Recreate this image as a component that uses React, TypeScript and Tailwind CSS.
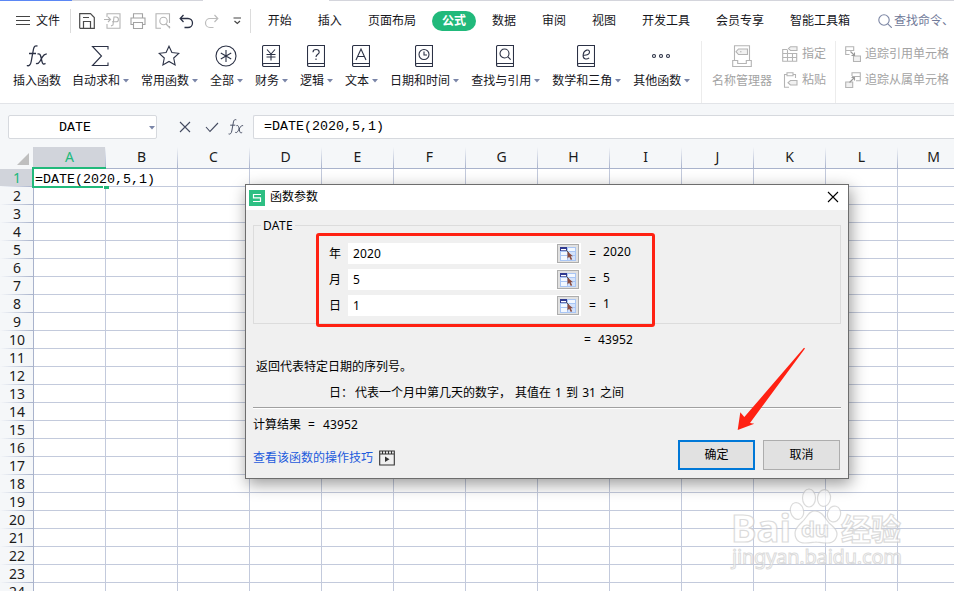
import React from 'react';

const INK = '#2b3145';
const GREY = '#b4b4b4';

const Svg: React.FC<{ w: number; h: number; color?: string; className?: string; children: React.ReactNode }> = ({ w, h, color = INK, className, children }) => (
  <svg width={w} height={h} viewBox={`0 0 ${w} ${h}`} fill="none" stroke={color} strokeWidth={1.1} className={`shrink-0 ${className ?? ''}`}>
    {children}
  </svg>
);

const Caret = () => (
  <svg width="6" height="4" viewBox="0 0 6 4" className="shrink-0"><path d="M0 0h6L3 3.6z" fill="#7a85a8" /></svg>
);

const FxIcon: React.FC<{ size?: number; color?: string }> = ({ size = 22, color = INK }) => (
  <svg width={size} height={size} viewBox="0 0 22 22" fill="none" stroke={color} strokeWidth={1.3} className="shrink-0">
    <path d="M11.500 1.200C9.300.2 8 1.400 7.500 4L5.200 16.500C4.700 19.600 3 21.500.8 20.500M3 8.500h7" />
    <path d="M11.500 9.200c2-.9 2.800.2 3.300 2.300l1.200 5.200c.5 2.300 1.600 3 3.500 1.700M20.800 9.200c-2-.8-3.200.8-4.500 3l-2.300 4c-1.200 2-2.300 3-4 2.200" />
  </svg>
);

const Book: React.FC<{ children: React.ReactNode }> = ({ children }) => (
  <Svg w={18} h={22}>
    <path d="M17.500 18.500V.5H2a1.500 1.500 0 0 0-1.500 1.500V20A1.500 1.500 0 0 0 2 21.500h15.500v-3H2A1.500 1.500 0 0 0 .5 20" />
    {children}
  </Svg>
);

const tabs = ['开始', '插入', '页面布局', '公式', '数据', '审阅', '视图', '开发工具', '会员专享', '智能工具箱'];

const functionGroups: { label: string; icon: React.ReactNode }[] = [
  { label: '自动求和', icon: <Svg w={18} h={22}><path d="M17 4.500V1.500H1.500L10.500 11L1.500 20.500H17V17.500" /></Svg> },
  { label: '常用函数', icon: <Svg w={22} h={22}><path d="M11 1.200l2.900 6.300 6.900.8-5.100 4.700 1.400 6.900L11 16.500l-6.100 3.400 1.400-6.900L1.200 8.300l6.900-.8z" /></Svg> },
  { label: '全部', icon: <Svg w={22} h={22}><circle cx="11" cy="11" r="10" /><path d="M11 5v12M5.800 8l10.400 6M16.200 8L5.800 14" /></Svg> },
  { label: '财务', icon: <Book><path d="M5 4.500l4 4.500 4-4.500M4.500 9.500h9M4.500 12h9M9 9v6.500" /></Book> },
  { label: '逻辑', icon: <Book><path d="M6 7.200c0-3.600 6.200-3.600 6.200 0C12.200 9.300 9 9.200 9 12M9 13.500v1.500" /></Book> },
  { label: '文本', icon: <Book><path d="M4 15L9 4l5 11M5.700 11.500h6.600" /></Book> },
  { label: '日期和时间', icon: <Book><circle cx="9" cy="9.500" r="5" /><path d="M9 6.500V10h3" /></Book> },
  { label: '查找与引用', icon: <Book><circle cx="8.500" cy="8.500" r="4.500" /><path d="M11.700 11.700l3 3" /></Book> },
  { label: '数学和三角', icon: <Book><path d="M6.200 10.200c4 .3 6.300-1 6.300-3.200 0-3.400-5.500-2.500-6.300 2.500-.7 4.700 3.300 5.600 6 3.300" /></Book> },
  { label: '其他函数', icon: <Svg w={20} h={22}><circle cx="3" cy="11" r="1.500" /><circle cx="10" cy="11" r="1.500" /><circle cx="17" cy="11" r="1.500" /></Svg> },
];

const QuickAccess = () => (
  <div className="flex items-center gap-[9px] pl-2">
    <Svg w={16} h={16} color="#4b4b4b"><path d="M.7 15.300V.7h10.800l3.800 3.800v10.800H.7M4.500 15V8.500h7V15M4 4.500h6" strokeWidth={1.200} /></Svg>
    <Svg w={17} h={16} color={GREY}><path d="M3 4V.7h13v14.600H3V11M0 6.500h6M4 4l2.500 2.500L4 9M7 13l2-1 1-8h2a2.200 2.200 0 0 1 0 4.800H8" /></Svg>
    <Svg w={16} h={16} color="#a2a2a2"><path d="M3.500 5V.8h9V5M3.500 11.500H1V5h14v6.500h-2.500M3.500 9.500h9v6h-9z" /></Svg>
    <Svg w={16} h={16} color={GREY}><path d="M6 15.200H1V.8h13.500V10M14.500 13v2.200" /><circle cx="8.500" cy="8" r="3.700" /><path d="M11 11l4 4" /></Svg>
    <Svg w={15} h={15} color={INK} className="-ml-px"><path d="M4.500 1L1.200 4.500 4.500 8M1.200 4.500H9a4.300 4.300 0 0 1 0 9H5.500" strokeWidth={1.300} /></Svg>
    <Svg w={15} h={15} color="#bcbcbc" className="ml-px"><path d="M10.500 1l3.300 3.500L10.500 8M13.800 4.500H6a4.300 4.300 0 0 0 0 9h3.500" strokeWidth={1.200} /></Svg>
    <Svg w={9} h={8} color="#444" className="ml-[5px]"><path d="M.5 1h7.500M1.500 4l2.800 2.500L7 4" strokeWidth={1.200} /></Svg>
  </div>
);

const MenuBar = () => (
  <div className="flex h-[40px] shrink-0 items-center whitespace-nowrap text-xs text-[#16161c]">
    <div className="flex w-[70px] items-center gap-[6px] pl-4">
      <Svg w={14} h={11} color="#444" className="-mt-px"><path d="M0 1.500h14M0 5.500h14M0 9.500h14" strokeWidth={1} /></Svg>
      <span>文件</span>
    </div>
    <div className="h-6 w-px bg-[#dcdcdc]" />
    <div className="flex w-[179px] shrink-0"><QuickAccess /></div>
    <div className="h-6 w-px shrink-0 bg-[#dcdcdc]" />
    <nav className="flex shrink-0 items-center gap-[26px] pl-[17px]">
      {tabs.map(tab => tab === '公式'
        ? <span key={tab} className="-mx-[10px] -mt-px flex h-5 w-11 items-center justify-center rounded-full bg-[#21b97b] font-bold text-white">{tab}</span>
        : <span key={tab}>{tab}</span>)}
    </nav>
    <div className="flex shrink-0 items-center gap-[2px] pl-7 text-[#707a99]">
      <Svg w={14} h={14} color="#7c86a4"><circle cx="6" cy="6" r="5.200" /><path d="M9.800 9.800l4 4" /></Svg>
      <span className="-mt-px">查找命令、</span>
    </div>
  </div>
);

const SmallTool: React.FC<{ label: string; icon: React.ReactNode }> = ({ label, icon }) => (
  <div className="flex h-[26px] items-center gap-1">{icon}<span>{label}</span></div>
);

const Ribbon = () => (
  <div className="flex h-[62px] shrink-0 whitespace-nowrap text-xs leading-4 text-[#16161c]">
    <div className="flex w-[701px] shrink-0 gap-3 pl-[13px] pt-1">
      <div className="-mr-px flex flex-col items-center gap-[6px]">
        <FxIcon />
        <span>插入函数</span>
      </div>
      {functionGroups.map(group => (
        <div key={group.label} className="flex flex-col items-center gap-[6px]">
          <div className="pr-[2px]">{group.icon}</div>
          <div className="flex items-center gap-[3px]"><span>{group.label}</span><Caret /></div>
        </div>
      ))}
    </div>
    <div className="flex w-[134px] shrink-0 border-l border-[#ececec] pl-[10px] text-[#a3a3a3]">
      <div className="flex flex-col items-center gap-[6px] pt-1">
        <Svg w={20} h={22} color={GREY}>
          <path d="M2.500 15V.7h15V15M.7 15.500h5v3h8.600v-3h5v6H.7z" />
          <path d="M6.500 4h9v5.500h-9L4 6.700zM8 6.700h1.500" fill="#f1f1f1" />
        </Svg>
        <span>名称管理器</span>
      </div>
      <div className="flex flex-col pl-[10px]">
        <SmallTool label="指定" icon={<Svg w={16} h={16} color={GREY}><path d="M5 3.500H.7v11.800h14V7M.7 7.500h14M.7 11.500h14M5.500 3.500v12M10.500 7.500v8" /><path d="M8.500.7H15v3.800H8.500L6.500 2.600z" fill="#f1f1f1" /></Svg>} />
        <SmallTool label="粘贴" icon={<Svg w={16} h={16} color={GREY}><path d="M7 15.200H2.500V2.500H5M11 2.500h2.500V6M5 .8h6v3H5z" /><path d="M8.500 8.500H15v4.500H8.500L6 10.700z" fill="#f1f1f1" /></Svg>} />
      </div>
    </div>
    <div className="flex flex-col border-l border-[#ececec] pl-[9px] text-[#a3a3a3]">
      <SmallTool label="追踪引用单元格" icon={<Svg w={16} h={16} color={GREY}><path d="M4.500 8.500H.7V.7h8V5M.7 4.500h8" /><path d="M8.500 10h7v5.500h-7z" fill="#f1f1f1" /><path d="M5.500 5.500l4 4M9.500 6.500v3h-3" stroke="#999" /></Svg>} />
      <SmallTool label="追踪从属单元格" icon={<Svg w={16} h={16} color={GREY}><path d="M7 4V.7h8.300v8H11M7 4.500h8.300" /><path d="M.7 10h7v5.500h-7z" fill="#f1f1f1" /><path d="M4.500 10.500l5-5M6.500 5.500h3v3" stroke="#999" /></Svg>} />
    </div>
  </div>
);

const FormulaBar = () => (
  <div className="flex h-[44px] shrink-0 items-center border-t border-[#e2e4e8] bg-[#f5f7f9] pt-[3px] font-['Liberation_Mono',monospace] text-[13.33px] text-black">
    <div className="ml-2 flex h-6 w-[149px] shrink-0 items-center rounded-[2px] border border-[#d6d9de] bg-white pl-[50px] pt-[2px]">
      <span className="w-[90px]">DATE</span>
      <Caret />
    </div>
    <div className="flex w-[96px] shrink-0 items-center pl-[22px]">
      <Svg w={12} h={12} color="#434a60"><path d="M1 1l10 10M11 1L1 11" /></Svg>
      <Svg w={14} h={12} color="#434a60" className="ml-[14px]"><path d="M1 6l4 4.500L13 2" /></Svg>
      <span className="ml-[9px]"><FxIcon size={16} color="#434a60" /></span>
    </div>
    <div className="flex h-6 flex-1 items-center rounded-l-[2px] border border-r-0 border-[#d6d9de] bg-white pl-[10px]">=DATE(2020,5,1)</div>
  </div>
);

const columns = 'ABCDEFGHIJKLM'.split('');
const rows = Array.from({ length: 24 }, (_, i) => i + 1);

const Sheet = () => (
  <div className="relative flex-1 font-['Noto_Sans',sans-serif] text-sm text-[#1b1b1b]">
    <div className="flex h-[22px] bg-[#f5f7f9]">
      <div className="flex w-[33px] shrink-0 items-start justify-end pr-1 pt-[6px]">
        <svg width="12" height="12" viewBox="0 0 12 12"><path d="M12 0v12H0z" fill="#bfbfbf" /></svg>
      </div>
      <div className="w-px shrink-0 bg-[#d0d3da]" />
      {columns.map(col => (
        <div key={col} className="flex w-[72px] shrink-0 border-b border-[#a9b3cc]">
          <div className={col === 'A' ? 'flex flex-1 items-center justify-center bg-[#d1d4db] pb-px text-[#21b97b]' : 'flex flex-1 items-center justify-center pb-px'}>{col}</div>
          <div className="w-px bg-linear-to-b from-[#f5f7f9] to-[#a9b3cc]" />
        </div>
      ))}
    </div>
    {rows.map(row => (
      <div key={row} className="flex h-[18px] leading-[17px]">
        <div className={row === 1 ? 'flex w-[33px] shrink-0 flex-col bg-[#d1d4db] text-[#21b97b]' : 'flex w-[33px] shrink-0 flex-col bg-[#f5f7f9]'}>
          <span className="h-[17px] pl-px text-center">{row}</span>
          <div className="h-px bg-linear-to-r from-[#f5f7f9] to-[#a9b3cc]" />
        </div>
        <div className="w-px shrink-0 bg-[#a9b3cc]" />
        {columns.map(col => <div key={col} className="w-[72px] shrink-0 border-b border-r border-[#c3cadc]" />)}
      </div>
    ))}
    {/* in-cell editor spills over into B1 */}
    <div className="absolute left-[32px] top-[20px] h-[21px] w-[74px] border-y-2 border-l-2 border-[#21b97b]">
      <div className="h-[17px] w-[142px] whitespace-nowrap bg-white pl-px pt-px font-['Liberation_Mono',monospace] text-[13.33px] text-black">=DATE(2020,5,1)</div>
      <div className="absolute -bottom-[3px] -right-[3px] h-1 w-[6px] border-l border-t border-white bg-[#21b97b]" />
    </div>
  </div>
);

const RangePicker = () => (
  <div className="flex h-[19px] w-[22px] items-center justify-center border border-[#adadad] bg-[#e1e1e1]">
    <svg width="16" height="14" viewBox="0 0 16 14">
      <path d="M0 0h16v14H0z" fill="#a9c6f5" />
      <path d="M1 5h6v3H1zM1 9h6v4H1zM8 1h7v3H8z" fill="#f3f8ff" />
      <path d="M8 5h7v3H8zM8 9h7v4H8z" fill="#d3e2fb" />
      <path d="M0 0h7v4H0z" fill="#303a91" /><path d="M1 2h5v1.300H1z" fill="#fff" />
      <path d="M6 3l3 3" stroke="#555" />
      <path d="M7.500 4.500v7l1.700-1.700 1.600 3.200 1.400-.7-1.500-3h2.300z" fill="#8a4a3c" />
    </svg>
  </div>
);

const args = [
  { label: '年', value: '2020' },
  { label: '月', value: '5' },
  { label: '日', value: '1' },
];

const FunctionDialog = () => (
  <div className="absolute left-[245px] top-[184px] flex h-[295px] w-[604px] flex-col border border-[#6d6d6d] bg-[#f0f0f0] text-xs leading-4 text-black shadow-[2px_5px_15px_rgba(0,0,0,0.4)]">
    <div className="flex h-[25px] shrink-0 items-center bg-white pl-[3px] pr-[9px]">
      <svg width="16" height="16" viewBox="0 0 16 16"><path d="M0 0h16v16H0z" fill="#2dbf83" /><path d="M12 4.500H4.500v3.300h7v3.700H4" fill="none" stroke="#fff" strokeWidth="1.200" /></svg>
      <span className="-mt-px flex-1 pl-[5px]">函数参数</span>
      <Svg w={12} h={12} color="#000" className="-mt-px"><path d="M1 1l10 10M11 1L1 11" /></Svg>
    </div>
    <fieldset className="mx-[7px] mt-[6px] h-[108px] shrink-0 border border-[#dcdcdc]">
      <legend className="ml-[7px] px-[2px] pt-[2px] tracking-[0.3px]">DATE</legend>
      <div className="-mt-px ml-[62px] h-[94px] w-[339px] rounded-[3px] border-[3px] border-[#ff2112] pl-[10px] pt-[7px]">
        {args.map(arg => (
          <div key={arg.label} className="mb-[5px] flex h-[21px] items-center">
            <span className="w-[19px]">{arg.label}</span>
            <div className="flex h-[21px] w-[233px] items-center justify-between bg-white pl-[5px] pr-[2px]">
              <span className="tracking-[0.13px]">{arg.value}</span>
              <RangePicker />
            </div>
            <span className="w-[22px] pl-2">=</span>
            <span className="pb-[4px] tracking-[0.13px]">{arg.value}</span>
          </div>
        ))}
      </div>
    </fieldset>
    <div className="ml-[338px] mt-2 flex gap-[7px] tracking-[0.13px]"><span>=</span><span>43952</span></div>
    <div className="ml-[10px] mt-[11px]">返回代表特定日期的序列号。</div>
    <div className="ml-[83px] mt-[10px] flex whitespace-pre">
      <span className="w-[26px]">日：</span>
      <span className="w-[160px]">代表一个月中第几天的数字，</span>
      <span className="[word-spacing:1px]">其值在 1 到 31 之间</span>
    </div>
    <div className="mx-[7px] mt-[6px] h-[2px] shrink-0 border-b border-white bg-[#a0a0a0]" />
    <div className="ml-[7px] mt-[8px] flex tracking-[0.13px]"><span className="w-[55px] tracking-normal">计算结果</span><span className="w-[15px]">=</span><span>43952</span></div>
    <div className="flex pl-[7px] pr-2 pt-[7px]">
      <div className="flex flex-1 items-start gap-[6px] pt-[10px] text-[#1d5bdc]">
        <span>查看该函数的操作技巧</span>
        <Svg w={16} h={16} color="#333"><path d="M.7 1h14.600v14H.7zM.7 4h14.600M3.500 1v3M6.500 1v3M9.500 1v3M12.500 1v3" /><path d="M6 6.500v5.500l4.500-2.700z" fill="#333" stroke="none" /></Svg>
      </div>
      <button className="mr-2 h-[30px] w-[77px] border-2 border-[#0078d7] bg-[#e1e1e1]">确定</button>
      <button className="h-[30px] w-[77px] border border-[#adadad] bg-[#e1e1e1]">取消</button>
    </div>
  </div>
);

const Watermark = () => (
  <svg width="180" height="90" viewBox="0 0 180 90" className="absolute left-[728px] top-[488px] opacity-75" fill="#fff" stroke="#d0d0d0" strokeWidth="1.200" fontFamily="Noto Sans, Noto Sans CJK SC, sans-serif">
    <text x="3" y="54" fontSize="38" fontWeight="bold" textLength="60" lengthAdjust="spacingAndGlyphs">Bai</text>
    <ellipse cx="81" cy="10" rx="6.500" ry="9" />
    <ellipse cx="96" cy="10" rx="6.500" ry="8.500" transform="rotate(8 96 10)" />
    <ellipse cx="69" cy="23" rx="6.500" ry="8.500" transform="rotate(-15 69 23)" />
    <ellipse cx="106" cy="26" rx="6.500" ry="8" transform="rotate(15 106 26)" />
    <path d="M87 23c7 0 10 7 14 12 6 5 10 9 7 15-3 7-11 5-20 4-9 1-17 3-20-4-3-7 1-11 6-16 5-4 6-11 13-11z" />
    <text x="73" y="49" fontSize="22" fontWeight="bold" textLength="28">du</text>
    <text x="113" y="52" fontSize="30" fontWeight="bold">经验</text>
    <text x="4" y="76" fontSize="20" strokeWidth="1" textLength="170">jingyan.baidu.com</text>
  </svg>
);

export default function App() {
  return (
    <div className="relative flex h-[591px] w-[954px] flex-col overflow-hidden bg-white font-['Noto_Sans','Noto_Sans_CJK_SC',sans-serif]">
      <div className="flex h-px shrink-0">
        <div className="w-[72px] bg-[#5b87f5]" />
        <div className="w-[131px] bg-[#d4d5dc]" />
        <div className="ml-[126px] flex-1 bg-[#d4d5dc]" />
      </div>
      <MenuBar />
      <Ribbon />
      <FormulaBar />
      <Sheet />
      <Watermark />
      <FunctionDialog />
      <svg width="70" height="86" viewBox="0 0 70 86" className="absolute left-[736px] top-[346px]">
        <path d="M68 1.700L8.300 71 4.300 66.300 1.700 84 18.300 77.700 14 77 69 2.500z" fill="#ff2112" />
      </svg>
    </div>
  );
}
